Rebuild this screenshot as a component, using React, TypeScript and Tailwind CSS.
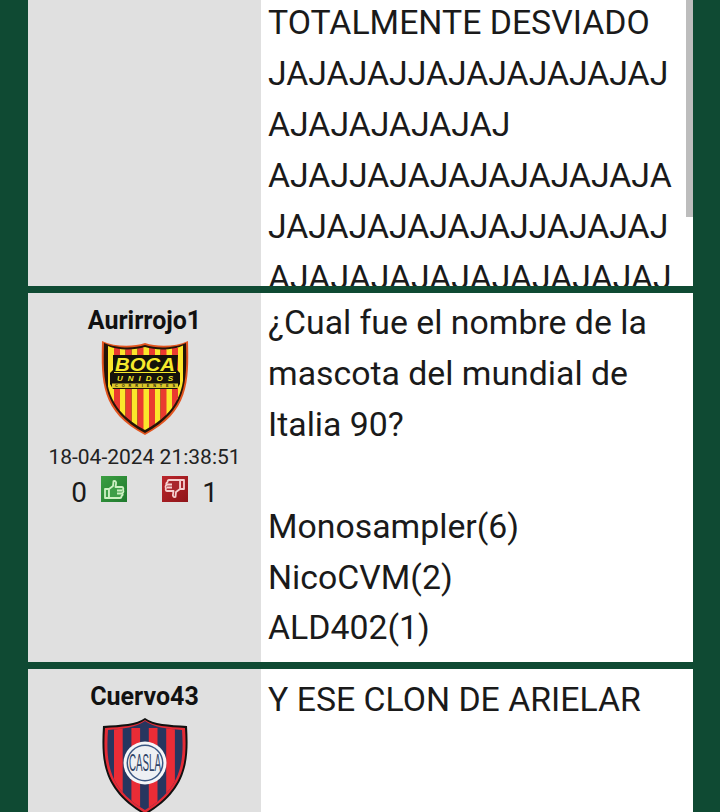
const bodyFont = { fontFamily: 'Roboto, sans-serif' };

function BocaCrest() {
  const yellow = [7, 18.5, 30.5, 42, 53.5, 65, 76];
  const red = [13, 24.5, 36.5, 48, 59.5, 71];
  return (
    <svg width="88" height="96" viewBox="0 0 88 96">
      <defs>
        <clipPath id="boca-shield">
          <path d="M5 5 C14 10 32 11 44 7 C56 11 74 10 83 5 C84 40 85 68 44 90 C3 68 4 40 5 5 Z" />
        </clipPath>
      </defs>
      <path d="M1 1 C14 7 32 7 44 3 C56 7 74 7 87 1 C88 42 88 72 44 95 C0 72 0 42 1 1 Z" fill="#e2541f" />
      <path d="M3 3 C14 8 32 9 44 5 C56 9 74 8 85 3 C86 42 86 70 44 93 C2 70 2 42 3 3 Z" fill="#241408" />
      <g clipPath="url(#boca-shield)">
        {yellow.map((x) => (
          <rect key={x} x={x} y="4" width="6" height="88" fill="#fbe62b" />
        ))}
        {red.map((x) => (
          <rect key={x} x={x} y="4" width="6" height="88" fill="#ea3a30" />
        ))}
      </g>
      <path d="M12 15 L77 15 L76 30 L79 33 L79 44 L76 49 L12 49 L9 44 L9 33 L12 30 Z" fill="#15120a" />
      <text x="44" y="31" textAnchor="middle" fontFamily="Liberation Sans, sans-serif" fontWeight="700" fontStyle="italic" fontSize="19" fill="#f6ea2c" textLength="60" lengthAdjust="spacingAndGlyphs">BOCA</text>
      <rect x="13" y="32" width="62" height="1" fill="#f6ea2c" />
      <text x="44" y="41" textAnchor="middle" fontFamily="Liberation Sans, sans-serif" fontWeight="700" fontStyle="italic" fontSize="8" fill="#f6ea2c" textLength="56">UNIDOS</text>
      <rect x="11" y="43.5" width="66" height="4.5" fill="#d9c72a" />
      <text x="44" y="47.2" textAnchor="middle" fontFamily="Liberation Sans, sans-serif" fontWeight="700" fontSize="3.8" fill="#15120a" textLength="60">CORRIENTES</text>
    </svg>
  );
}

function SanLorenzoCrest() {
  const redStripes = [13, 30.4, 47.8, 65.2];
  return (
    <svg width="88" height="96" viewBox="0 0 88 96">
      <defs>
        <clipPath id="casla-shield">
          <path d="M7 12 C22 11 36 9 44 3 C52 9 66 11 81 12 C83 42 82 70 44 92 C6 70 5 42 7 12 Z" />
        </clipPath>
      </defs>
      <path d="M2 8 C20 7 36 6 44 0 C52 6 68 7 86 8 C88 42 87 72 44 97 C1 72 0 42 2 8 Z" fill="#111" />
      <path d="M4 10 C21 9 36 8 44 2 C52 8 67 9 84 10 C86 42 85 70 44 95 C3 70 2 42 4 10 Z" fill="#e42b36" />
      <g clipPath="url(#casla-shield)">
        <rect x="6" y="3" width="76" height="92" fill="#27365f" />
        {redStripes.map((x) => (
          <rect key={x} x={x} y="10" width="8.7" height="84" fill="#ea2c36" />
        ))}
      </g>
      <circle cx="44" cy="45" r="21.5" fill="#f5f6f8" />
      <circle cx="44" cy="45" r="18.5" fill="#3a5682" />
      <circle cx="44" cy="45" r="17" fill="#eef0f3" />
      <text x="44" y="53" textAnchor="middle" fontFamily="Liberation Sans, sans-serif" fontSize="23" fill="#2f4468" textLength="32" lengthAdjust="spacingAndGlyphs">CASLA</text>
    </svg>
  );
}

function ThumbUpIcon() {
  return (
    <svg width="26" height="26" viewBox="0 0 26 26" fill="#3f9f48" stroke="#cdf0c2" strokeWidth="1.8" strokeLinejoin="round">
      <path d="M4 13 H8 V22 H4 Z" />
      <path d="M8 13 L12 10 L12.5 5 C14.5 4.5 15.5 6 15 8 L14.5 11 H21 C22.5 11 22.5 13 22 14 C22.8 15 22.5 16.5 21.5 17 C22 18.5 21.5 19.5 20.5 20 C20.5 21.5 20 22 19 22 H8 Z" />
      <path d="M16 14.5 H21 M16 17.5 H21" fill="none" />
    </svg>
  );
}

function ThumbDownIcon() {
  return (
    <svg width="26" height="26" viewBox="0 0 26 26" fill="#a9262c" stroke="#f5cfcf" strokeWidth="1.8" strokeLinejoin="round">
      <path d="M22 13 H18 V4 H22 Z" />
      <path d="M18 13 L14 16 L13.5 21 C11.5 21.5 10.5 20 11 18 L11.5 15 H5 C3.5 15 3.5 13 4 12 C3.2 11 3.5 9.5 4.5 9 C4 7.5 4.5 6.5 5.5 6 C5.5 4.5 6 4 7 4 H18 Z" />
      <path d="M5 8.5 H10 M5 11.5 H10" fill="none" />
    </svg>
  );
}

function Score({ up, down }: { up: number; down: number }) {
  return (
    <div className="mt-[6px] flex h-[30px] items-center text-[28px] text-[#1a1a1a]">
      <span className="w-[16px] translate-y-[1px] text-center">{up}</span>
      <span className="ml-[14px] h-[26px] w-[26px] -translate-y-[3px] bg-linear-to-br from-[#3c9f42] to-[#1f7a2e]">
        <ThumbUpIcon />
      </span>
      <span className="ml-[35px] h-[26px] w-[26px] -translate-y-[3px] bg-linear-to-br from-[#bb262c] to-[#8f1519]">
        <ThumbDownIcon />
      </span>
      <span className="ml-[14px] w-[16px] translate-y-[1px] text-center">{down}</span>
    </div>
  );
}

export default function App() {
  return (
    <div className="flex h-[812px] w-[720px] flex-col gap-[7px] overflow-hidden bg-[#0f4a33] pl-[28px] pr-[27px]" style={bodyFont}>
      <div className="relative flex h-[286px] shrink-0 overflow-hidden">
        <div className="w-[233px] shrink-0 bg-[#e0e0e0]" />
        <div className="-mt-[3px] flex-1 whitespace-nowrap bg-white pl-[7px] text-[33.8px] leading-[51px] text-[#1a1a1a]">
          <div>TOTALMENTE DESVIADO</div>
          <div>JAJAJAJJAJAJAJAJAJAJ</div>
          <div>AJAJAJAJAJAJ</div>
          <div>AJAJJAJAJAJAJAJAJAJA</div>
          <div>JAJAJAJAJAJAJJAJAJAJ</div>
          <div>AJAJAJAJAJAJAJAJAJAJ</div>
        </div>
        <div className="absolute right-0 top-0 h-[217px] w-[7px] bg-[#bdbdbd]" />
      </div>

      <div className="flex h-[369px] shrink-0 overflow-hidden">
        <div className="flex w-[233px] shrink-0 flex-col items-center bg-[#e0e0e0] pt-[14px]">
          <div className="text-[25px] font-bold leading-[28px] text-[#111]">Aurirrojo1</div>
          <div className="mt-[6px] h-[96px] -translate-y-[1px]"><BocaCrest /></div>
          <div className="mt-[6px] text-[21px] leading-[28px] text-[#222]">18-04-2024 21:38:51</div>
          <Score up={0} down={1} />
        </div>
        <div className="flex-1 bg-white pl-[7px] pt-[5px] text-[33.8px] leading-[50.9px] text-[#1a1a1a]">
          <div>¿Cual fue el nombre de la</div>
          <div>mascota del mundial de</div>
          <div>Italia 90?</div>
          <div className="h-[50.9px]" />
          <div>Monosampler(6)</div>
          <div>NicoCVM(2)</div>
          <div>ALD402(1)</div>
        </div>
      </div>

      <div className="flex flex-1 overflow-hidden">
        <div className="flex w-[233px] shrink-0 flex-col items-center bg-[#e0e0e0] pt-[14px]">
          <div className="text-[25px] font-bold leading-[28px] text-[#111]">Cuervo43</div>
          <div className="mt-[7px] h-[96px]"><SanLorenzoCrest /></div>
        </div>
        <div className="flex-1 bg-white pl-[7px] pt-[5px] text-[33.8px] leading-[51px] text-[#1a1a1a]">
          <div>Y ESE CLON DE ARIELAR</div>
        </div>
      </div>
    </div>
  );
}
